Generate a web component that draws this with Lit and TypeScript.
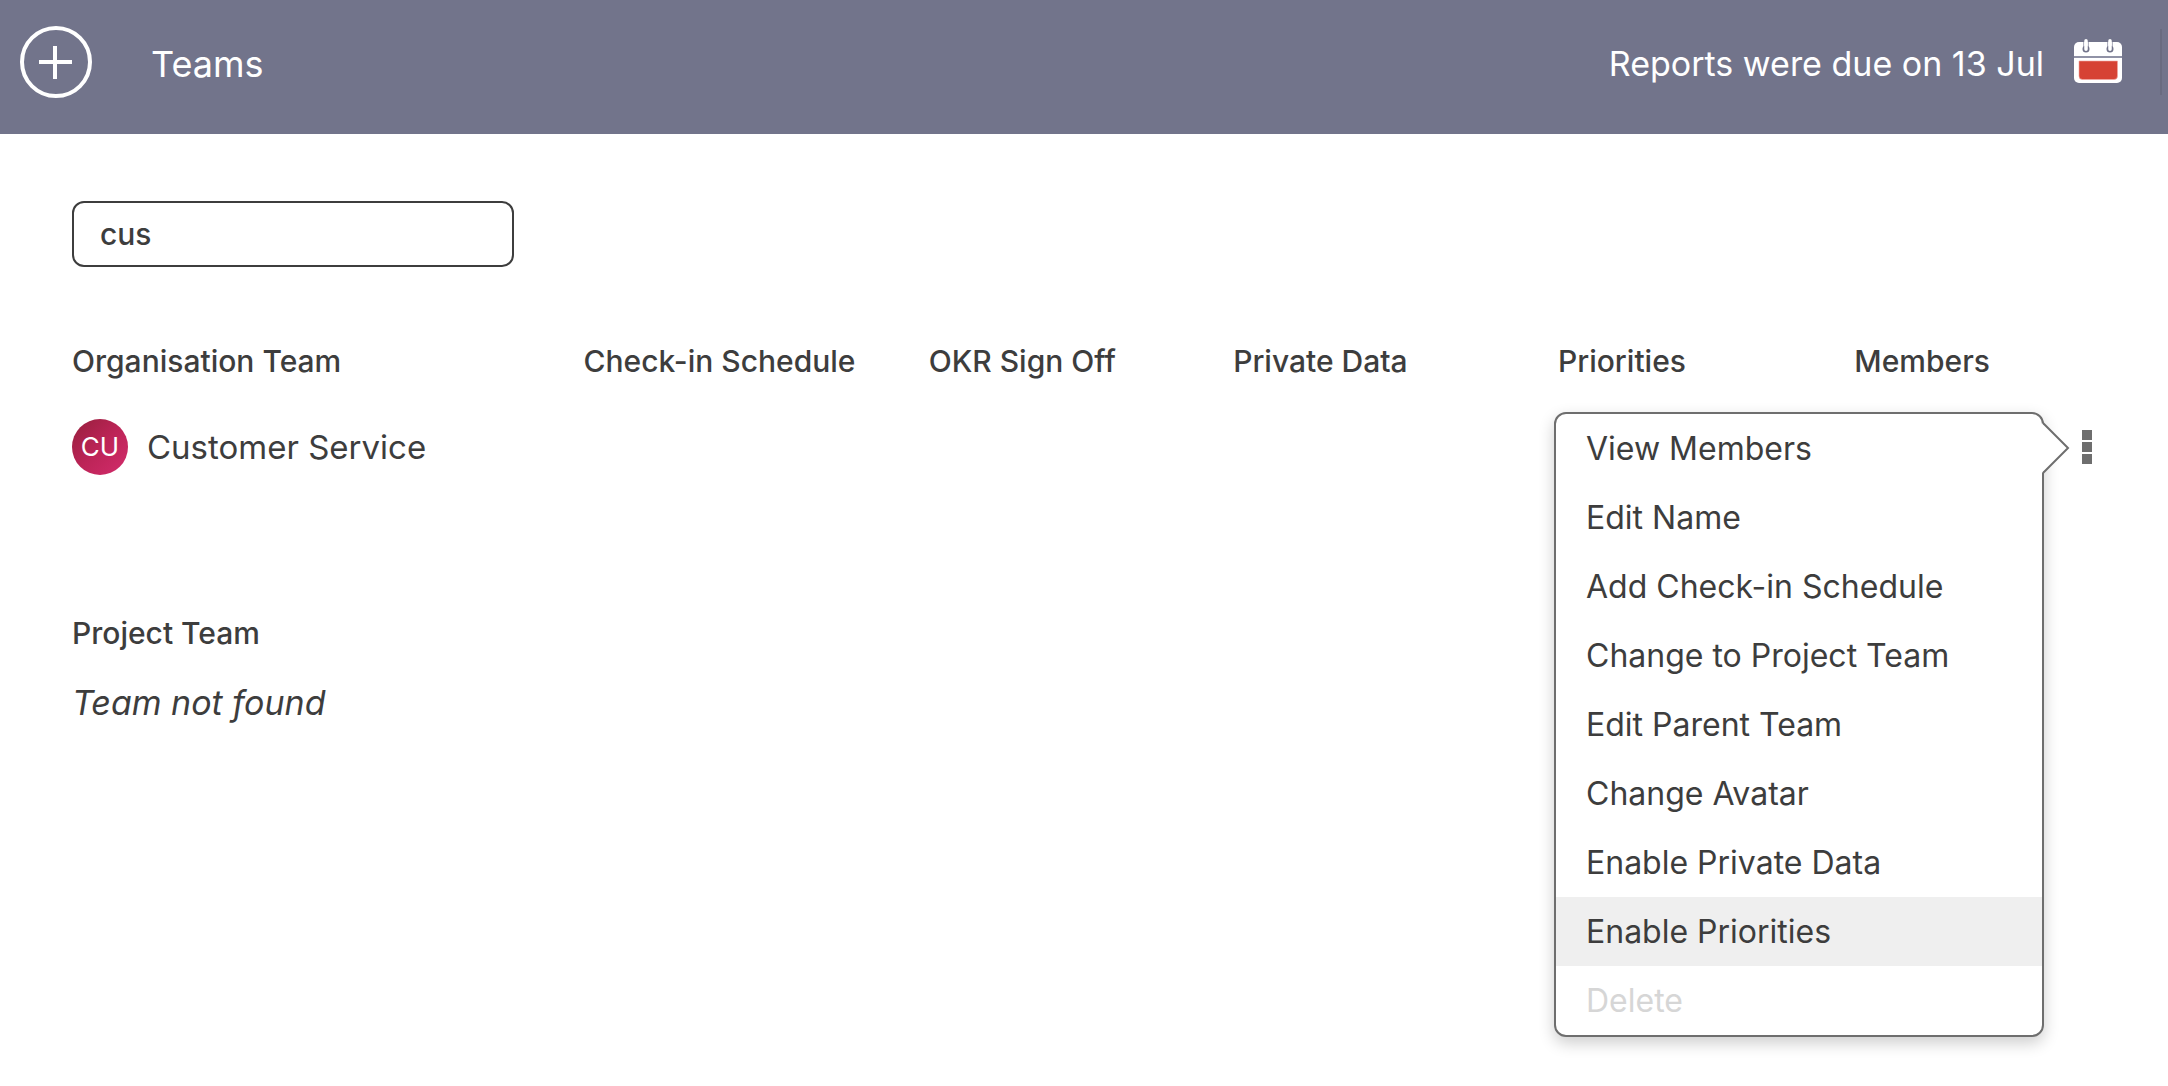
import { LitElement, html, css, svg } from "lit";
import { customElement, property, state } from "lit/decorators.js";
import { classMap } from "lit/directives/class-map.js";

interface MenuAction {
  label: string;
  disabled?: boolean;
  active?: boolean;
}

const COLUMNS = [
  { label: "Organisation Team", name: "team" },
  { label: "Check-in Schedule", name: "schedule" },
  { label: "OKR Sign Off", name: "okr" },
  { label: "Private Data", name: "private" },
  { label: "Priorities", name: "priorities" },
  { label: "Members", name: "members" },
];

const ACTIONS: MenuAction[] = [
  { label: "View Members" },
  { label: "Edit Name" },
  { label: "Add Check-in Schedule" },
  { label: "Change to Project Team" },
  { label: "Edit Parent Team" },
  { label: "Change Avatar" },
  { label: "Enable Private Data" },
  { label: "Enable Priorities", active: true },
  { label: "Delete", disabled: true },
];

const calendarShapes = svg`
  <rect x="0" y="3" width="48" height="41" rx="5" fill="#fff" />
  <rect x="0" y="17" width="48" height="2" fill="#9092a6" />
  <path d="M5 22H43.500V37Q43.500 40.500 40 40.500H8.500Q5 40.500 5 37Z" fill="#d64234" stroke="#f0a8a2" stroke-width="0.600" />
  <circle cx="12" cy="10" r="3.500" fill="#72748b" />
  <circle cx="36" cy="10" r="3.500" fill="#72748b" />
  <path d="M9.800 3V10M14.200 3V10M33.800 3V10M38.200 3V10" stroke="#72748b" stroke-width="0.800" />
  <path d="M12 1.800V10.200M36 1.800V10.200" stroke="#fff" stroke-width="3.500" stroke-linecap="round" />
`;

@customElement("top-bar")
export class TopBar extends LitElement {
  @property() heading = "";
  @property() notice = "";

  static styles = css`
    :host {
      display: block;
      background: #72748b;
      color: #fff;
    }
    .bar {
      display: flex;
      align-items: center;
      height: 134px;
      padding: 0 6px 10px 20px;
      box-sizing: border-box;
    }
    .add {
      display: flex;
      align-items: center;
      justify-content: center;
      width: 72px;
      height: 72px;
      padding: 0;
      border: 4px solid #fff;
      border-radius: 50%;
      background: none;
      color: inherit;
      cursor: pointer;
    }
    .title,
    .notice {
      padding-top: 4px;
      line-height: 44px;
    }
    .title {
      flex: 1;
      margin: 0 0 0 59px;
      font-size: 36px;
      font-weight: 400;
    }
    .notice {
      font-size: 34px;
    }
    .calendar {
      display: flex;
      margin: 0 38px 2px 30px;
      padding: 0;
      border: 0;
      background: none;
      cursor: pointer;
    }
    .divider {
      width: 2px;
      height: 66px;
      background: #696b80;
    }
  `;

  render() {
    return html`
      <header class="bar">
        <button class="add" aria-label="Add team">
          <svg width="34" height="34" viewBox="0 0 34 34" aria-hidden="true">
            <path d="M0 17H33M16 1V34" stroke="#fff" stroke-width="4" fill="none" />
          </svg>
        </button>
        <h1 class="title">${this.heading}</h1>
        <span class="notice">${this.notice}</span>
        <button class="calendar" aria-label="Open calendar">
          <svg width="48" height="44" viewBox="0 0 48 44" aria-hidden="true">${calendarShapes}</svg>
        </button>
        <span class="divider"></span>
      </header>
    `;
  }
}

@customElement("action-menu")
export class ActionMenu extends LitElement {
  @property({ attribute: false }) actions: MenuAction[] = [];
  @state() private open = true;

  static styles = css`
    :host {
      display: block;
      position: relative;
    }
    .trigger {
      display: flex;
      flex-direction: column;
      align-items: center;
      justify-content: center;
      gap: 2px;
      width: 30px;
      height: 56px;
      padding: 0;
      border: 0;
      background: none;
      cursor: pointer;
    }
    .dot {
      width: 10px;
      height: 10px;
      background: #6e6e6e;
    }
    .menu {
      position: absolute;
      top: -7px;
      right: calc(100% + 28px);
      z-index: 1;
      width: 490px;
      box-sizing: border-box;
      border: 2px solid #6e6e6e;
      border-radius: 12px;
      background: #fff;
      box-shadow: 0 6px 16px rgba(0, 0, 0, 0.2);
    }
    .arrow {
      position: absolute;
      top: 8px;
      left: 100%;
    }
    .list {
      margin: 0;
      padding: 0;
      list-style: none;
      overflow: hidden;
      border-radius: 10px;
    }
    .item {
      display: block;
      width: 100%;
      height: 69px;
      padding: 0 30px;
      border: 0;
      background: none;
      color: #3d3d3d;
      font-family: inherit;
      font-size: 32px;
      text-align: left;
      cursor: pointer;
    }
    .item.active,
    .item:hover:enabled {
      background: #efefef;
    }
    .item:disabled {
      color: #d6d6d6;
      cursor: default;
    }
  `;

  render() {
    return html`
      <button
        class="trigger"
        aria-label="Team actions"
        aria-expanded=${this.open}
        @click=${() => (this.open = !this.open)}
      >
        <span class="dot"></span><span class="dot"></span><span class="dot"></span>
      </button>
      ${this.open
        ? html`<div class="menu">
            <ul class="list">
              ${this.actions.map(
                (a) => html`<li>
                  <button class=${classMap({ item: true, active: !!a.active })} ?disabled=${a.disabled}>
                    ${a.label}
                  </button>
                </li>`
              )}
            </ul>
            <svg class="arrow" width="28" height="52" viewBox="0 0 28 52" aria-hidden="true">
              <path d="M0 1L26 26L0 51Z" fill="#fff" />
              <path d="M1 1L26 26L1 51" fill="none" stroke="#6e6e6e" stroke-width="2" />
            </svg>
          </div>`
        : null}
    `;
  }
}

@customElement("app-root")
export class AppRoot extends LitElement {
  @state() private query = "cus";

  static styles = css`
    :host {
      display: block;
      min-height: 100vh;
      background: #fff;
      color: #3d3d3d;
      font-family: Inter, "Liberation Sans", sans-serif;
    }
    .content {
      padding: 67px 66px 48px 72px;
    }
    .search {
      display: block;
      width: 442px;
      height: 66px;
      box-sizing: border-box;
      padding: 0 26px;
      border: 2px solid #3d3d3d;
      border-radius: 12px;
      background: #fff;
      color: inherit;
      font-family: inherit;
      font-size: 30px;
      font-weight: 500;
      outline: none;
    }
    .teams {
      width: 100%;
      margin-top: 74px;
      border-collapse: collapse;
      table-layout: fixed;
    }
    .teams th {
      height: 40px;
      padding: 0;
      font-size: 30px;
      line-height: 40px;
      font-weight: 500;
      text-align: left;
      white-space: nowrap;
    }
    .teams td {
      padding: 38px 0 0;
    }
    .col-team {
      width: 25.2%;
    }
    .col-schedule {
      width: 17%;
    }
    .col-okr {
      width: 15%;
    }
    .col-private {
      width: 16%;
    }
    .col-priorities {
      width: 14.6%;
    }
    .col-actions {
      width: 30px;
    }
    .team {
      display: flex;
      align-items: center;
      gap: 19px;
      font-size: 33px;
      line-height: 44px;
    }
    .avatar {
      display: flex;
      align-items: center;
      justify-content: center;
      width: 56px;
      height: 56px;
      border-radius: 50%;
      background: linear-gradient(135deg, #961f3c, #bc2457 50%, #d32c6c);
      color: #fff;
      font-size: 26px;
    }
    .subheading {
      margin: 138px 0 0;
      font-size: 30px;
      line-height: 40px;
      font-weight: 500;
    }
    .empty {
      margin: 28px 0 0;
      font-size: 34px;
      line-height: 44px;
      font-style: italic;
    }
  `;

  render() {
    return html`
      <top-bar heading="Teams" notice="Reports were due on 13 Jul"></top-bar>
      <main class="content">
        <input
          class="search"
          type="text"
          aria-label="Search teams"
          .value=${this.query}
          @input=${(e: Event) => (this.query = (e.target as HTMLInputElement).value)}
        />
        <table class="teams">
          <colgroup>
            ${COLUMNS.map((c) => html`<col class="col-${c.name}" />`)}
            <col class="col-actions" />
          </colgroup>
          <thead>
            <tr>
              ${COLUMNS.map((c) => html`<th scope="col">${c.label}</th>`)}
              <td></td>
            </tr>
          </thead>
          <tbody>
            <tr>
              <td>
                <div class="team"><span class="avatar">CU</span><span>Customer Service</span></div>
              </td>
              <td></td>
              <td></td>
              <td></td>
              <td></td>
              <td></td>
              <td><action-menu .actions=${ACTIONS}></action-menu></td>
            </tr>
          </tbody>
        </table>
        <h2 class="subheading">Project Team</h2>
        <p class="empty">Team not found</p>
      </main>
    `;
  }
}
